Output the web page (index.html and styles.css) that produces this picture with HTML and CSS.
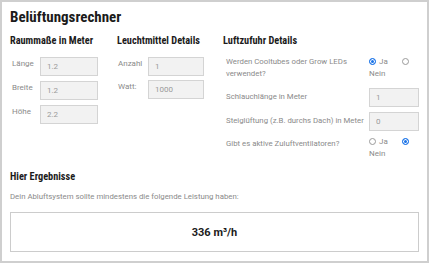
FILE: index.html
```html
<!DOCTYPE html>
<html lang="de">
<head>
<meta charset="utf-8">
<title>Belüftungsrechner</title>
<link rel="stylesheet" href="styles.css">
</head>
<body>
<div class="calc">
  <h1 class="title">Belüftungsrechner</h1>
  <div class="cols">
    <section class="col">
      <h2 class="head">Raummaße in Meter</h2>
      <div class="rows rows-1">
        <div class="row"><label class="lbl lbl-1">Länge</label><input class="field field-1" type="text" value="1.2"></div>
        <div class="row"><label class="lbl lbl-1">Breite</label><input class="field field-1" type="text" value="1.2"></div>
        <div class="row"><label class="lbl lbl-1">Höhe</label><input class="field field-1" type="text" value="2.2"></div>
      </div>
    </section>
    <section class="col">
      <h2 class="head">Leuchtmittel Details</h2>
      <div class="rows rows-2">
        <div class="row"><label class="lbl lbl-2">Anzahl</label><input class="field field-2" type="text" value="1"></div>
        <div class="row"><label class="lbl lbl-2">Watt:</label><input class="field field-2" type="text" value="1000"></div>
      </div>
    </section>
    <section class="col">
      <h2 class="head">Luftzufuhr Details</h2>
      <div class="rows rows-3">
        <div class="qrow qrow-first">
          <span class="q">Werden Cooltubes oder Grow LEDs verwendet?</span>
          <span class="radios"><input class="radio" type="radio" name="cool" checked>Ja <input class="radio radio-second" type="radio" name="cool"> Nein</span>
        </div>
        <div class="qrow">
          <span class="q">Schlauchlänge in Meter</span>
          <input class="field field-3" type="text" value="1">
        </div>
        <div class="qrow">
          <span class="q">Steiglüftung (z.B. durchs Dach) in Meter</span>
          <input class="field field-3" type="text" value="0">
        </div>
        <div class="qrow qrow-last">
          <span class="q">Gibt es aktive Zuluftventilatoren?</span>
          <span class="radios"><input class="radio" type="radio" name="vent">Ja <input class="radio radio-second" type="radio" name="vent" checked> Nein</span>
        </div>
      </div>
    </section>
  </div>
  <section class="results">
    <h2 class="head">Hier Ergebnisse</h2>
    <p class="desc">Dein Abluftsystem sollte mindestens die folgende Leistung haben:</p>
    <div class="result">336 m³/h</div>
  </section>
</div>
</body>
</html>
```
FILE: styles.css
```css
html, body {
  margin: 0;
  padding: 0;
  background: #ffffff;
}

body {
  font-family: Roboto, "Liberation Sans", sans-serif;
  color: #222;
}

.calc {
  box-sizing: border-box;
  width: 429px;
  height: 263px;
  border: 2px solid #cfcfcf;
  padding: 6px 8px 0 8px;
  overflow: hidden;
}

.title {
  margin: 0;
  font-family: "Roboto Condensed", Roboto, sans-serif;
  font-weight: 700;
  font-size: 15px;
  line-height: 18px;
  color: #1b1b1b;
}

.cols {
  display: grid;
  grid-template-columns: 97px 96px 1fr;
  column-gap: 10px;
  margin-top: 8px;
}

.head {
  margin: 0;
  font-family: "Roboto Condensed", Roboto, sans-serif;
  font-weight: 700;
  font-size: 10.3px;
  line-height: 13px;
  color: #1b1b1b;
}

.rows {
  display: flex;
  flex-direction: column;
  margin-top: 10px;
}

.rows-1 { gap: 5px; }
.rows-2 { gap: 4px; }
.rows-3 { gap: 5px; margin-top: 9px; }

.row {
  display: flex;
  align-items: flex-start;
}

.lbl {
  font-size: 8px;
  line-height: 12px;
  color: #8a8a8a;
  padding-top: 1px;
  box-sizing: border-box;
}

.lbl-1 { width: 30px; padding-left: 2px; }
.lbl-2 { width: 31px; padding-left: 1px; }

.field {
  box-sizing: border-box;
  height: 19px;
  margin: 0;
  padding: 0 6px;
  border: 1px solid #d4d4d4;
  background: #f2f2f2;
  font-family: Roboto, sans-serif;
  font-size: 8px;
  color: #9a9a9a;
  outline: none;
}

.field-1 { width: 58px; }
.field-2 { width: 56px; }
.field-3 { width: 50px; flex: none; }

.qrow {
  display: flex;
  align-items: flex-start;
  justify-content: space-between;
}

.qrow-first { margin-bottom: 3px; }

.q {
  flex: 1;
  padding-left: 3px;
  padding-right: 2px;
  padding-top: 3px;
  font-size: 7.8px;
  line-height: 12px;
  color: #8a8a8a;
  white-space: normal;
}

.qrow-first .q { padding-top: 0; padding-right: 8px; }
.qrow-last .q { padding-top: 2px; }

.radios {
  flex: none;
  width: 50px;
  font-size: 8px;
  line-height: 12px;
  color: #8a8a8a;
}

.radio {
  -webkit-appearance: none;
  appearance: none;
  box-sizing: border-box;
  width: 7px;
  height: 7px;
  margin: 0 3px 0 0;
  border: 1px solid #9a9a9a;
  border-radius: 50%;
  vertical-align: -1px;
  background: #fff;
}

.radio:checked {
  border-color: #1a73e8;
  background: #1a73e8;
  box-shadow: inset 0 0 0 1px #fff;
}

.radio-second { margin-left: 12px; }

.results {
  margin-top: 10px;
}

.desc {
  margin: 8px 0 0 0;
  font-size: 7.8px;
  line-height: 12px;
  color: #8a8a8a;
}

.result {
  box-sizing: border-box;
  height: 40px;
  margin-top: 9px;
  border: 1px solid #cccccc;
  display: flex;
  align-items: center;
  justify-content: center;
  font-weight: 700;
  font-size: 11px;
  color: #1b1b1b;
}
```
